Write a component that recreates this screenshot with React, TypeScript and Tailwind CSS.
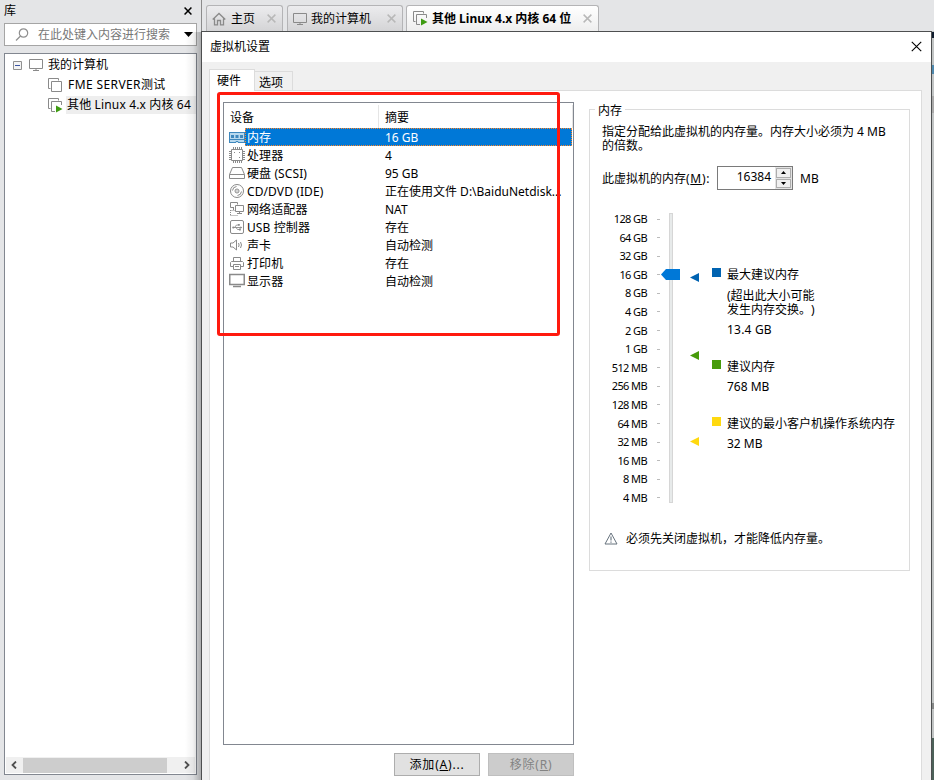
import { useState } from 'react';
import type { ReactNode } from 'react';

interface Device {
  name: string;
  summary: string;
  icon: ReactNode;
}

const MonitorIcon = ({ className = '' }: { className?: string }) => (
  <svg className={className} width="16" height="14" viewBox="0 0 16 14" fill="none" stroke="#8a8a8a">
    <path d="M1.5 1.5h13v9h-13zM8 10.5v2M5 12.5h6" />
  </svg>
);

const VmIcon = ({ running = false }: { running?: boolean }) => (
  <svg className="shrink-0" width="15" height="15" viewBox="0 0 15 15" fill="none" stroke="#8a8a8a">
    <path d="M2.5 10.5h-2v-10h10v2" />
    <path d={running ? 'M7 13.5H3.5v-10h10V7' : 'M3.5 3.5h10v10h-10z'} />
    {running && <path d="M8 7.5v7l6.5-3.5z" fill="#3f9c12" stroke="none" />}
  </svg>
);

const svgProps = { width: 16, height: 16, viewBox: '0 0 16 16', fill: 'none', stroke: '#8a8a8a' };

const devices: Device[] = [
  {
    name: '内存',
    summary: '16 GB',
    icon: (
      <svg {...svgProps} stroke="#3f88bd">
        <path d="M.5 4v9.5H7v-1h2v1h6.5V4z" fill="#b9d9ee" stroke="none" />
        <path d="M0 3.5h16M.5 4v9.5M15.5 4v9.5M0 13.5h7v-1h2v1h7M1 10.5h14" />
        <path d="M2 6h3v3H2zM6.5 6h3v3h-3zM11 6h3v3h-3z" fill="#3f88bd" stroke="none" />
      </svg>
    ),
  },
  {
    name: '处理器',
    summary: '4',
    icon: (
      <svg {...svgProps}>
        <path d="M2.5 2.5h11v11h-11z" />
        <path d="M4.5 0v2M6.5 0v2M8.5 0v2M10.5 0v2M12.5 0v2M4.5 14v2M6.5 14v2M8.5 14v2M10.5 14v2M12.5 14v2M0 4.5h2M0 6.5h2M0 8.5h2M0 10.5h2M0 12.5h2M14 4.5h2M14 6.5h2M14 8.5h2M14 10.5h2M14 12.5h2M5 5.5h1M10 5.5h1M10 10.5h1" />
      </svg>
    ),
  },
  {
    name: '硬盘 (SCSI)',
    summary: '95 GB',
    icon: (
      <svg {...svgProps}>
        <path d="M3.5 2.5h9l3 7v4H.5v-4zM.5 9.5h15" />
      </svg>
    ),
  },
  {
    name: 'CD/DVD (IDE)',
    summary: '正在使用文件 D:\\BaiduNetdisk...',
    icon: (
      <svg {...svgProps}>
        <circle cx="8" cy="8" r="6.5" />
        <circle cx="8" cy="8" r="2" />
        <path d="M3.5 7.5a4.5 4.5 0 014-4M12.5 8.5a4.5 4.5 0 01-4 4" />
        <circle cx="8" cy="8" r=".7" fill="#8a8a8a" stroke="none" />
      </svg>
    ),
  },
  {
    name: '网络适配器',
    summary: 'NAT',
    icon: (
      <svg {...svgProps}>
        <path d="M5 6.5H1.5v-5h7v2M4.5 6.5V9M6.5 4.5h8v6h-8zM10.5 10.5v2M8 12.5h5" />
        <path d="M1.5 9v6M1.5 9.5H6M1.5 14.5H9" strokeDasharray="1 1" />
      </svg>
    ),
  },
  {
    name: 'USB 控制器',
    summary: '存在',
    icon: (
      <svg {...svgProps}>
        <rect x="1.5" y="1.5" width="13" height="13" rx="1.5" />
        <path d="M4 8.5h8M5.500 8.500l2-2.500h2M7 8.500l1.500 2h2" strokeWidth=".9" />
        <circle cx="4.300" cy="8.500" r="1.100" fill="#8a8a8a" stroke="none" />
        <path d="M9 5h1.800v1.800H9zM10 9.600h1.800v1.800H10zM11.500 7.200l1.800 1.300-1.800 1.300z" fill="#8a8a8a" stroke="none" />
      </svg>
    ),
  },
  {
    name: '声卡',
    summary: '自动检测',
    icon: (
      <svg {...svgProps}>
        <path d="M1.5 6v4h2.5l3.5 3V3L4 6zM9.5 6q1.2 2 0 4M11.5 5q2 3 0 6" />
      </svg>
    ),
  },
  {
    name: '打印机',
    summary: '存在',
    icon: (
      <svg {...svgProps}>
        <path d="M4.5 6V2.500h7V6M4 11.500H1.500v-4l1-1h11l1 1v4H12M4.500 9.500h7v5h-7zM6 11.500h4" />
      </svg>
    ),
  },
  {
    name: '显示器',
    summary: '自动检测',
    icon: (
      <svg {...svgProps}>
        <path d="M.75 1.5h14.5v10H.75z" strokeWidth="1.5" />
        <path d="M4 13.500h8" strokeWidth="1.5" />
      </svg>
    ),
  },
];

const memorySteps = [
  '128 GB', '64 GB', '32 GB', '16 GB', '8 GB', '4 GB', '2 GB', '1 GB',
  '512 MB', '256 MB', '128 MB', '64 MB', '32 MB', '16 MB', '8 MB', '4 MB',
];

function CloseIcon({ size, color, width = 1.2 }: { size: number; color: string; width?: number }) {
  return (
    <svg className="shrink-0" width={size} height={size} viewBox="0 0 10 10" stroke={color} strokeWidth={width}>
      <path d="M.7.7l8.6 8.6M9.3.7L.7 9.3" />
    </svg>
  );
}

function Library() {
  return (
    <aside className="relative flex h-full w-[201px] shrink-0 flex-col bg-[#e4e5e7] pl-1 pb-[5px]">
      <div className="flex h-[23px] shrink-0 items-center justify-between pb-[2px] pr-[9px]">
        <span>库</span>
        <CloseIcon size={8} color="#000" width={1.9} />
      </div>

      {/* Search */}
      <div className="flex h-[23px] w-[193px] shrink-0 items-center border border-[#a5a5a5] bg-white">
        <svg className="ml-[10px] mr-[9px]" width="14" height="14" viewBox="0 0 14 14" fill="none" stroke="#909090" strokeWidth="1.2">
          <circle cx="8.5" cy="5" r="4.2" />
          <path d="M5.5 8L1 12.5" />
        </svg>
        <span className="flex-1 text-[#777]">在此处键入内容进行搜索</span>
        <svg className="mr-[3px]" width="9" height="5" viewBox="0 0 9 5">
          <path d="M0 0h9L4.5 5z" />
        </svg>
      </div>

      {/* Tree */}
      <div className="mt-[7px] flex w-[193px] flex-1 flex-col border border-[#828790] bg-white">
        <div className="flex-1 pt-[1px]">
          <div className="flex h-5 items-center pl-2">
            <svg width="9" height="9" viewBox="0 0 9 9" fill="#f4f4f4" stroke="#919191">
              <path d="M.5.5h8v8h-8z" />
              <path d="M2 4.5h5" stroke="#3b55a3" />
            </svg>
            <MonitorIcon className="ml-[6px] mr-[4px]" />
            <span>我的计算机</span>
          </div>
          <div className="flex h-5 items-center pl-[43px]">
            <VmIcon />
            <span className="pl-[5px] tracking-[0.4px]">FME SERVER测试</span>
          </div>
          <div className="flex h-5 items-center pl-[43px]">
            <VmIcon running />
            <span className="ml-[3px] h-[18px] flex-1 overflow-hidden whitespace-nowrap bg-[#eee] pl-[1px] leading-[18px] tracking-[0.15px]">其他 Linux 4.x 内核 64</span>
          </div>
        </div>
        <div className="m-[1px] flex h-[16px] items-center bg-[#f0f0f0]">
          <svg className="ml-[5px]" width="6" height="8" viewBox="0 0 6 8" fill="none" stroke="#505050" strokeWidth="1.8">
            <path d="M5 .5L1.5 4 5 7.5" />
          </svg>
          <div className="ml-[6px] h-[15px] w-[144px] bg-[#cdcdcd]" />
          <svg className="ml-auto mr-[5px]" width="6" height="8" viewBox="0 0 6 8" fill="none" stroke="#505050" strokeWidth="1.8">
            <path d="M1 .5L4.5 4 1 7.5" />
          </svg>
        </div>
      </div>

      {/* Shadow cast by the dialog */}
      <div className="absolute right-0 top-8 bottom-0 w-4 bg-gradient-to-r from-transparent via-black/5 to-black/25" />
    </aside>
  );
}

function TabBar() {
  const tab = 'flex h-[26px] items-center rounded-t-[3px] border border-b-0 border-[#b4b4b6]';
  const idle = 'bg-gradient-to-b from-[#ececee] to-[#d4d4d6]';
  return (
    <div className="flex h-[31px] items-end border-l border-[#8b8b8b] pl-1">
      <div className={`${tab} ${idle} w-[77px] pl-[5px]`}>
        <svg width="14" height="14" viewBox="0 0 14 14" fill="none" stroke="#8a8a8a" strokeWidth="1.3">
          <path d="M.7 7.5L7 1.5l6.3 6M2.5 6.5v6.3H5.5V8.5h3v4.3h3V6.5" />
        </svg>
        <span className="ml-[5px] mr-[12px]">主页</span>
        <CloseIcon size={9} color="#b8b8b8" width={1.6} />
      </div>
      <div className={`${tab} ${idle} ml-1 w-[116px] pl-[4px]`}>
        <MonitorIcon />
        <span className="ml-[3px] mr-[16px]">我的计算机</span>
        <CloseIcon size={9} color="#b8b8b8" width={1.6} />
      </div>
      <div className={`${tab} ml-[3px] w-[193px] bg-gradient-to-b from-white to-[#eee] pl-[6px]`}>
        <VmIcon running />
        <span className="ml-[4px] w-[142px] whitespace-nowrap font-bold">其他 Linux 4.x 内核 64 位</span>
        <span className="ml-[9px] flex"><CloseIcon size={9} color="#b8b8b8" width={1.6} /></span>
      </div>
    </div>
  );
}

function DeviceList() {
  const [selected, setSelected] = useState(0);
  return (
    <div className="relative h-[643px] w-[351px] border border-[#828790] bg-white">
      <div className="flex h-[25px] pt-[2px] leading-[25px]">
        <div className="w-[155px] border-r border-[#e5e5e5] pl-[6px]">设备</div>
        <div className="w-[194px] border-r border-[#e5e5e5] pl-[6px]">摘要</div>
      </div>
      {devices.map((device, i) => (
        <div key={device.name} className="flex h-[18px] cursor-default pl-[5px]" onClick={() => setSelected(i)}>
          <span className="flex w-[16px] shrink-0 items-center justify-center">{device.icon}</span>
          <div
            className={`flex w-[327px] border border-dotted leading-[18px] ${
              i === selected ? 'border-[#ff8728] bg-[#0078d7] text-white' : 'border-transparent'
            }`}
          >
            <span className="w-[139px] shrink-0 pl-[1px] tracking-[0.1px]">{device.name}</span>
            <span className="whitespace-nowrap">{device.summary}</span>
          </div>
        </div>
      ))}

      {/* Highlight frame */}
      <div className="pointer-events-none absolute -left-[7px] -top-[11px] h-[244px] w-[343px] rounded-[3px] border-[3px] border-[#ff1a0f]" />
    </div>
  );
}

function Pointer({ color, className }: { color: string; className: string }) {
  return (
    <svg className={className} width="9" height="9" viewBox="0 0 9 9" fill={color}>
      <path d="M0 4.5L9 0v9z" />
    </svg>
  );
}

function LegendTitle({ color, children }: { color: string; children: ReactNode }) {
  return (
    <div className="flex h-[16px] items-center whitespace-nowrap">
      <span className="mb-[3px] mr-[6px] h-[9px] w-[9px] shrink-0" style={{ backgroundColor: color }} />
      <span className="pt-[1px]">{children}</span>
    </div>
  );
}

function MemoryPanel() {
  return (
    <fieldset className="relative h-[462px] w-[321px] border border-[#dcdcdc]">
      <span className="absolute -top-[7px] left-[5px] bg-white px-[3px] leading-[16px]">内存</span>
      <p className="mt-[15px] ml-[12px] whitespace-nowrap leading-[14px] [text-spacing-trim:space-all]">
        指定分配给此虚拟机的内存量。内存大小必须为 4 MB
        <br />
        的倍数。
      </p>
      <div className="mt-[13px] ml-[12px] flex h-[24px] items-center">
        <span className="w-[115px] whitespace-nowrap pt-[1px]">
          此虚拟机的内存<span className="tracking-[0.7px]">(<u>M</u>):</span>
        </span>
        <div className="flex h-[24px] w-[76px] justify-end border border-[#7a7a7a] bg-white">
          <span className="mr-[4px] leading-[20px]">16384</span>
          <div className="flex w-[17px] flex-col gap-[1px] bg-[#e3e3e3] p-[1px]">
            <span className="flex flex-1 items-center justify-center border border-[#adadad] bg-[#f0f0f0]">
              <svg width="5" height="3" viewBox="0 0 5 3"><path d="M0 3h5L2.5 0z" /></svg>
            </span>
            <span className="flex flex-1 items-center justify-center border border-[#adadad] bg-[#f0f0f0]">
              <svg width="5" height="3" viewBox="0 0 5 3"><path d="M0 0h5L2.5 3z" /></svg>
            </span>
          </div>
        </div>
        <span className="ml-[7px] pt-[1px]">MB</span>
      </div>

      {/* Scale, slider and legend */}
      <div className="mt-[20px] flex h-[298px]">
        <div className="flex h-[297px] w-[70px] flex-col justify-between text-[11px] leading-[18px] tracking-[-0.6px]">
          {memorySteps.map((step) => (
            <div key={step} className="flex items-center justify-end whitespace-nowrap">
              <span>{step}</span>
              <span className="ml-[10px] h-px w-[3px] bg-[#bbb]" />
            </div>
          ))}
        </div>
        <div className="relative ml-[9px] mt-[3px] h-[290px] w-[4px] border border-[#d6d6d6] bg-[#e7eaea]">
          <svg className="absolute -left-[9px] top-[55px] max-w-none" width="19" height="11" viewBox="0 0 19 11">
            <path d="M0 5.5L5 0h14v11H5z" fill="#0078d7" />
          </svg>
        </div>
        <div className="ml-[17px] flex w-[9px] flex-col">
          <Pointer color="#0063b1" className="mt-[63px]" />
          <Pointer color="#479b0b" className="mt-[69px]" />
          <Pointer color="#ffd90f" className="mt-[77px]" />
        </div>
        <div className="ml-[13px] mt-[56px]">
          <LegendTitle color="#0063b1">最大建议内存</LegendTitle>
          <p className="mt-[7px] ml-[15px] leading-[14px] [text-spacing-trim:space-all]">
            (超出此大小可能
            <br />
            发生内存交换。)
          </p>
          <p className="mt-[5px] ml-[15px] leading-[16px] tracking-[0.2px]">13.4 GB</p>
          <div className="mt-[20px]">
            <LegendTitle color="#479b0b">建议内存</LegendTitle>
            <p className="mt-[5px] ml-[15px] leading-[16px]">768 MB</p>
          </div>
          <div className="mt-[20px]">
            <LegendTitle color="#ffd90f">建议的最小客户机操作系统内存</LegendTitle>
            <p className="mt-[5px] ml-[15px] leading-[16px]">32 MB</p>
          </div>
        </div>
      </div>

      <div className="mt-[22px] ml-[14px] flex h-[16px] items-center">
        <svg width="14" height="13" viewBox="0 0 14 13" fill="none" stroke="#66727d">
          <path d="M7 1L13 12H1z" />
          <path d="M7 4.5v4M7 9.5v1.3" stroke="#8c969f" strokeWidth="1.5" />
        </svg>
        <span className="ml-[8px] pt-[1px]">必须先关闭虚拟机，才能降低内存量。</span>
      </div>
    </fieldset>
  );
}

function SettingsDialog() {
  return (
    <section className="flex w-[731px] flex-1 flex-col border-x border-t border-[#4d4f50] bg-[#f0f0f0] text-black">
      <header className="flex h-[30px] items-center justify-between bg-white pl-[8px] pr-[9px] pb-[1px]">
        <span>虚拟机设置</span>
        <CloseIcon size={11} color="#000" width={1} />
      </header>

      <div className="flex h-[28px] shrink-0 items-end pl-[7px]">
        <div className="z-10 -mb-px flex h-[22px] w-[46px] items-center border border-b-0 border-[#dcdcdc] bg-white pl-[7px]">硬件</div>
        <div className="flex h-[19px] w-[38px] items-center border border-b-0 border-l-0 border-[#dcdcdc] pl-[4px] pt-[3px]">选项</div>
      </div>

      <div className="ml-[7px] mr-[9px] flex flex-1 items-start gap-[15px] border-x border-t border-[#dcdcdc] bg-white pl-[13px]">
        <div className="mt-[11px]">
          <DeviceList />
          <div className="mt-[8px] flex justify-end gap-[8px]">
            <button className="h-[23px] w-[86px] border border-[#adadad] bg-[#e1e1e1] tracking-[0.8px]">
              添加(<u>A</u>)...
            </button>
            <button disabled className="h-[23px] w-[86px] border border-[#bfbfbf] bg-[#ccc] text-[#838383] tracking-[0.8px]">
              移除(<u>R</u>)
            </button>
          </div>
        </div>
        <div className="mt-[18px]">
          <MemoryPanel />
        </div>
      </div>
    </section>
  );
}

export default function App() {
  return (
    <div className="flex h-[780px] w-[934px] overflow-hidden bg-[#e4e5e7] font-['Noto_Sans','Noto_Sans_CJK_SC',sans-serif] text-[12px] leading-[16px] text-black">
      <Library />
      <main className="flex min-w-0 flex-1 flex-col">
        <TabBar />
        <div className="flex flex-1">
          <SettingsDialog />
          {/* Sliver of the console behind the dialog */}
          <div className="flex w-[2px] flex-col bg-[#c1c4c4]">
            <div className="mt-[1px] h-[6px] bg-[#0f1c2e]" />
            <div className="mt-[27px] h-[9px] bg-[#4e88ad]" />
            <div className="mt-[22px] h-[17px] bg-[#aaa]" />
            <div className="mt-[590px] h-[6px] bg-[#858787]" />
            <div className="mt-[29px] flex-1 bg-[#4c6159]" />
          </div>
        </div>
      </main>
    </div>
  );
}
